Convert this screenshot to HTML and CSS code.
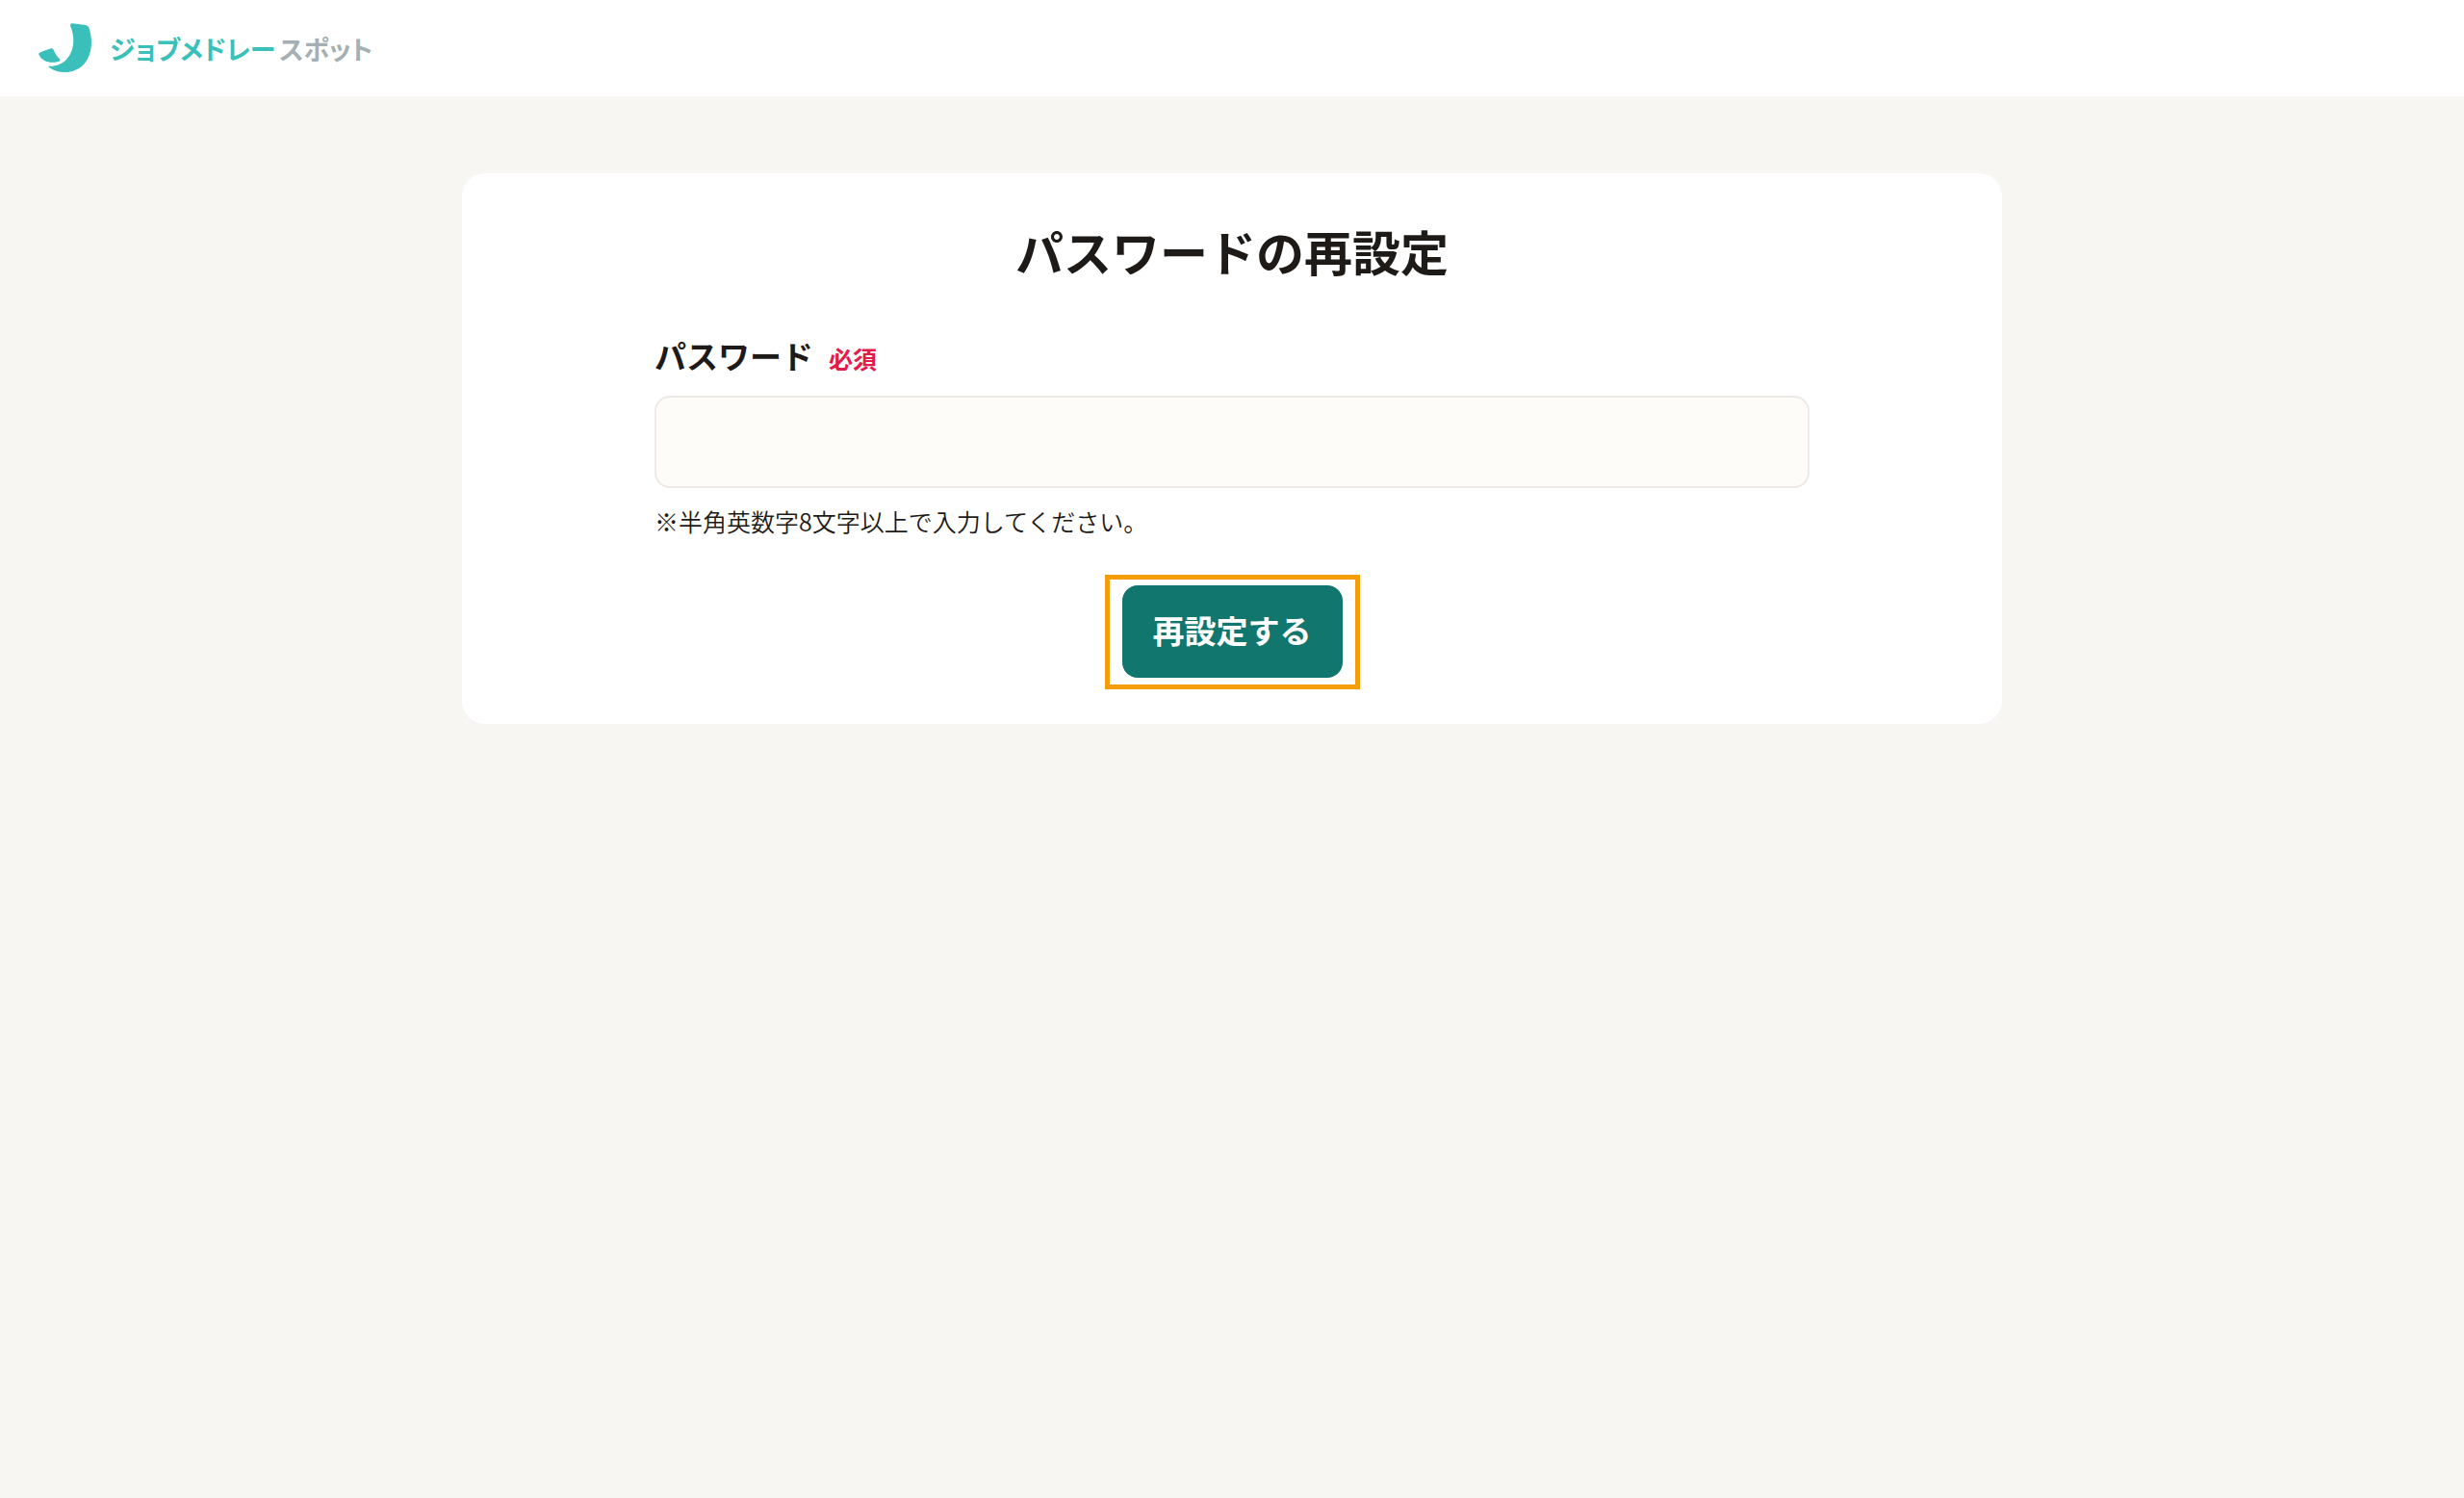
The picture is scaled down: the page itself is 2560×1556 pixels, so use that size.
FILE: index.html
```html
<!DOCTYPE html>
<html lang="ja">
<head>
<meta charset="utf-8">
<meta name="viewport" content="width=device-width, initial-scale=1">
<title>パスワードの再設定</title>
<link rel="stylesheet" href="styles.css">
</head>
<body>
<header class="header">
  <a class="logo" href="#">
    <svg class="logo-mark" viewBox="0 0 56 52" aria-hidden="true">
      <path d="M35 .3 49 2Q51.500 2.300 52.500 5C56.500 17 56 31 48.500 41C39.500 53 21 54 10.500 45.500Q10 44.500 11.500 44.700C31 45 42 25 33.200 3Q32.500 0 35 .3Z"/>
      <path d="M1.200 30.700Q7 27.700 13.500 26.200 14.800 26 15.300 27.200 18 34 22.500 38Q23.200 39 22 39.400C14 42.500 3.500 40.500.300 32.500Q0 31.300 1.200 30.700Z"/>
    </svg>
    <span class="logo-text">
      <span class="logo-name">ジョブメドレー</span>
      <span class="logo-sub">スポット</span>
    </span>
  </a>
</header>
<main class="main">
  <section class="card">
    <h1 class="title">パスワードの再設定</h1>
    <form class="form">
      <div class="label-row">
        <label class="label" for="password">パスワード</label>
        <span class="required">必須</span>
      </div>
      <input class="input" id="password" type="password" aria-describedby="password-help" required>
      <p class="help" id="password-help">※半角英数字8文字以上で入力してください。</p>
      <div class="highlight">
        <button class="button" type="submit">再設定する</button>
      </div>
    </form>
  </section>
</main>
</body>
</html>
```

FILE: styles.css
```css
* {
  box-sizing: border-box;
}

body {
  margin: 0;
  background: #f7f6f2;
  color: #1e1a17;
  font-family: "Noto Sans CJK JP", sans-serif;
  font-size: 25px;
}

.header {
  display: flex;
  align-items: center;
  height: 100px;
  padding: 0 40px;
  background: #fff;
}

.logo {
  display: flex;
  align-items: center;
  gap: 18px;
  text-decoration: none;
}

.logo-mark {
  width: 56px;
  height: 52px;
  fill: #3abfbb;
}

.logo-text {
  display: flex;
  gap: 4px;
  padding-top: 2px;
  font-size: 27px;
  font-weight: 700;
  line-height: 40px;
  font-feature-settings: "palt";
}

.logo-name {
  color: #3abfbb;
}

.logo-sub {
  color: #a5afb4;
}

.main {
  padding: 80px 40px;
}

.card {
  max-width: 1600px;
  margin: 0 auto;
  padding: 44px 200px 36px;
  border-radius: 24px;
  background: #fff;
}

.title {
  margin: 0 0 48px;
  font-size: 50px;
  font-weight: 700;
  line-height: 72px;
  text-align: center;
}

.form {
  display: flex;
  flex-direction: column;
}

.label-row {
  display: flex;
  align-items: baseline;
  gap: 16px;
  margin-bottom: 14px;
  line-height: 50px;
}

.label {
  font-size: 33px;
  font-weight: 700;
}

.required {
  color: #e31b4b;
  font-weight: 700;
}

.input {
  width: 100%;
  height: 96px;
  padding: 0 24px;
  border: 2px solid #ede9e4;
  border-radius: 16px;
  background: #fdfcf8;
  color: inherit;
  font: inherit;
  font-size: 33px;
}

.help {
  margin: 16px 0 38px;
  font-weight: 350;
  line-height: 36px;
}

.highlight {
  align-self: center;
  padding: 6px 13px 7px;
  border: 5px solid #f59e0b;
}

.button {
  display: block;
  height: 96px;
  padding: 0 32px 4px;
  border: 0;
  border-radius: 16px;
  background: #10766e;
  color: #fff;
  font: inherit;
  font-size: 33px;
  font-weight: 700;
}
```
